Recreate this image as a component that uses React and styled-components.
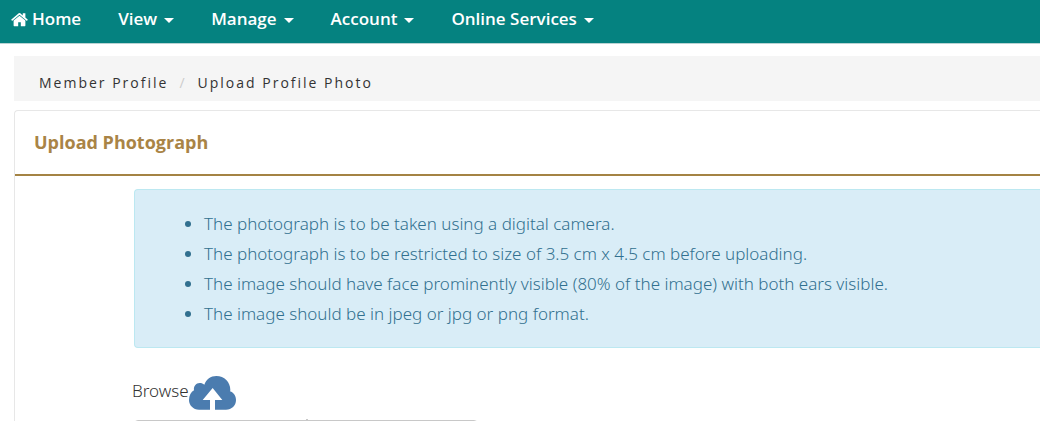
import React from "react";
import styled, { createGlobalStyle } from "styled-components";

const GlobalStyle = createGlobalStyle`
  html {
    scrollbar-width: none;
  }

  body {
    margin: 0;
    background-color: white;
    color: #333;
    font-family: "Segoe UI", "Noto Sans", "Open Sans", sans-serif;
    font-size: 17px;
    font-weight: 300;
    line-height: 30px;
  }

  * {
    box-sizing: border-box;
  }
`;

const Navbar = styled.nav`
  display: flex;
  gap: 37px;
  height: 44px;
  padding: 4px 11px 9px;
  background-color: #058280;
  border-bottom: 1px solid #b9d3d3;
  font-family: "Segoe UI", "Open Sans", sans-serif;
`;

const NavLink = styled.a`
  display: flex;
  align-items: center;
  gap: 4px;
  color: white;
  font-weight: 600;
  text-decoration: none;
  white-space: nowrap;
`;

const NavButton = styled.button`
  display: flex;
  align-items: center;
  gap: 7px;
  padding: 0;
  border: none;
  background: none;
  color: white;
  font: inherit;
  font-weight: 600;
  white-space: nowrap;
  cursor: pointer;
`;

const Caret = styled.span`
  margin-top: 2px;
  border-top: 5px solid white;
  border-right: 5px solid transparent;
  border-left: 5px solid transparent;
`;

const Main = styled.main`
  padding: 12px 0 40px 14px;
`;

const Breadcrumb = styled.ol`
  display: flex;
  margin: 0 0 9px;
  padding: 12px 25px 3px;
  background-color: #f5f5f5;
  font-family: "Segoe UI", "Open Sans", sans-serif;
  font-size: 14px;
  font-weight: 400;
  letter-spacing: 2px;
  list-style: none;
`;

const Crumb = styled.li`
  & + &::before {
    content: "/";
    padding: 0 11px;
    color: #ccc;
  }
`;

const CrumbLink = styled.a`
  color: #333;
  text-decoration: none;
`;

const Panel = styled.section`
  border: 1px solid #e7e7e7;
  border-right: none;
  border-radius: 4px 0 0 4px;
`;

const PanelTitle = styled.h1`
  margin: 0;
  padding: 16px 19px 17px;
  border-bottom: 2px solid #a48344;
  color: #a98446;
  font-family: "Segoe UI", "Open Sans", sans-serif;
  font-size: 18px;
  font-weight: 700;
`;

const PanelBody = styled.div`
  padding: 13px 0 20px 119px;
`;

const Notice = styled.div`
  padding: 19px 15px 18px;
  border: 1px solid #bce8f1;
  border-right: none;
  border-radius: 4px 0 0 4px;
  background-color: #d9edf7;
  color: #31708f;
`;

const NoticeList = styled.ul`
  margin: 0;
  padding-left: 54px;
`;

const UploadLabel = styled.label`
  display: flex;
  align-items: flex-start;
  width: fit-content;
  margin: 28px 0 10px -2px;
  cursor: pointer;
`;

const FileInput = styled.input`
  position: absolute;
  width: 1px;
  height: 1px;
  opacity: 0;
`;

const Preview = styled.div`
  position: relative;
  width: 344px;
  height: 160px;
  border: 1px solid #c8c8c8;
  border-radius: 4px;

  &::before {
    content: "";
    position: absolute;
    top: -2px;
    left: 50%;
    width: 2px;
    height: 1px;
    background-color: #c8c8c8;
  }
`;

const HomeIcon = () => (
  <svg width="17" height="17" viewBox="64 160 1664 1440" fill="currentColor" aria-hidden="true">
    <path d="M1472 992v480q0 26-19 45t-45 19h-384v-384h-256v384h-384q-26 0-45-19t-19-45v-480q0-1 .5-3t.5-3l575-474 575 474q1 2 1 6zm223-69l-62 74q-8 9-21 11h-3q-13 0-21-7l-692-577-692 577q-12 8-24 7-13-2-21-11l-62-74q-8-10-7-23.5t11-21.5l719-599q32-26 76-26t76 26l244 204v-195q0-14 9-23t23-9h192q14 0 23 9t9 23v408l219 182q10 8 11 21.5t-7 23.5z" />
  </svg>
);

const CloudUploadIcon = () => (
  <svg width="47" height="34" viewBox="0 0 141 102" aria-hidden="true">
    <path
      fill="#4b7caf"
      d="M30 101C13 101 0 88 0 72C0 58 6 48 15 43C13 31 21 21 32 21C38 21 42 23 46 26C52 10 65 0 82 0C106 0 124 18 124 42C124 43 124 44 123 46C134 50 141 60 141 72C141 89 128 101 111 101H78V72H100L71 36L41 72H63V101Z"
    />
  </svg>
);

const menus = ["View", "Manage", "Account", "Online Services"];

const rules = [
  "The photograph is to be taken using a digital camera.",
  "The photograph is to be restricted to size of 3.5 cm x 4.5 cm before uploading.",
  "The image should have face prominently visible (80% of the image) with both ears visible.",
  "The image should be in jpeg or jpg or png format.",
];

const App = () => {
  return (
    <>
      <GlobalStyle />
      <Navbar>
        <NavLink href="#">
          <HomeIcon /> Home
        </NavLink>
        {menus.map((menu) => (
          <NavButton type="button" key={menu}>
            {menu} <Caret />
          </NavButton>
        ))}
      </Navbar>
      <Main>
        <Breadcrumb>
          <Crumb><CrumbLink href="#">Member Profile</CrumbLink></Crumb>
          <Crumb>Upload Profile Photo</Crumb>
        </Breadcrumb>
        <Panel>
          <PanelTitle>Upload Photograph</PanelTitle>
          <PanelBody>
            <Notice>
              <NoticeList>
                {rules.map((rule) => (
                  <li key={rule}>{rule}</li>
                ))}
              </NoticeList>
            </Notice>
            <UploadLabel htmlFor="photo">
              Browse
              <CloudUploadIcon />
              <FileInput type="file" id="photo" accept=".jpeg,.jpg,.png" />
            </UploadLabel>
            <Preview />
          </PanelBody>
        </Panel>
      </Main>
    </>
  );
};

export default App;
